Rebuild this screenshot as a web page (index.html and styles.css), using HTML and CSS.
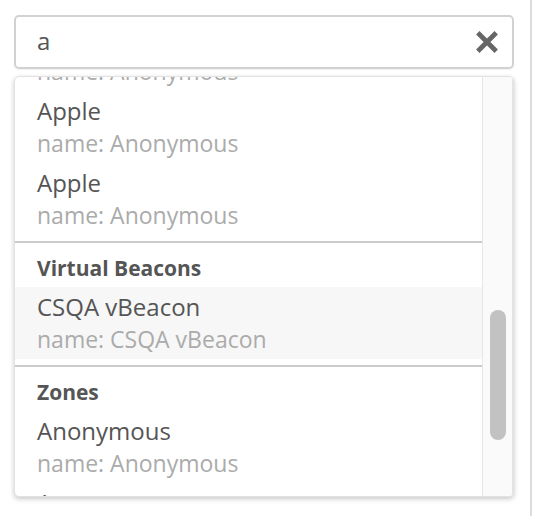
FILE: index.html
```html
<!DOCTYPE html>
<html>
<head>
<meta charset="utf-8">
<link rel="stylesheet" href="styles.css">
</head>
<body>
<div class="panel">
  <div class="search">
    <span class="query">a</span>
    <svg class="clear" viewBox="0 0 24 24" width="26" height="26" aria-hidden="true">
      <path d="M3.5 3.5 L20.5 20.5 M20.5 3.5 L3.5 20.5" stroke="#666" stroke-width="4.4" stroke-linecap="butt" fill="none"/>
    </svg>
  </div>
  <div class="dropdown">
    <div class="list">
      <div class="list-inner" style="margin-top:-58px">
        <div class="group">
          <div class="item"><div class="title">Anonymous</div><div class="sub">name: Anonymous</div></div>
          <div class="item"><div class="title">Apple</div><div class="sub">name: Anonymous</div></div>
          <div class="item"><div class="title">Apple</div><div class="sub">name: Anonymous</div></div>
        </div>
        <div class="group">
          <div class="header">Virtual Beacons</div>
          <div class="item active"><div class="title">CSQA vBeacon</div><div class="sub">name: CSQA vBeacon</div></div>
        </div>
        <div class="group">
          <div class="header">Zones</div>
          <div class="item"><div class="title">Anonymous</div><div class="sub">name: Anonymous</div></div>
          <div class="item"><div class="title">Anonymous</div><div class="sub">name: Anonymous</div></div>
        </div>
      </div>
    </div>
    <div class="track"><div class="thumb"></div></div>
  </div>
</div>
</body>
</html>
```
FILE: styles.css
```css
html, body {
  margin: 0;
  padding: 0;
  background: #fff;
}
body {
  font-family: "Open Sans", "DejaVu Sans", sans-serif;
}
.panel {
  width: 532px;
  height: 516px;
  box-sizing: border-box;
  border-right: 2px solid #dcdcdc;
  padding: 15px 0 0 14px;
}
.search {
  width: 500px;
  height: 54px;
  box-sizing: border-box;
  border: 2px solid #d2d2d2;
  border-radius: 5px;
  display: flex;
  align-items: center;
  padding: 0 12px 0 21px;
  box-shadow: 0 1px 1px rgba(0,0,0,0.06);
}
.query {
  flex: 1;
  font-size: 24px;
  color: #555;
  line-height: 1;
  padding-bottom: 2px;
}
.clear {
  display: block;
  flex: 0 0 auto;
}
.dropdown {
  margin-top: 7px;
  width: 500px;
  height: 421px;
  box-sizing: border-box;
  border: 1px solid #e2e2e2;
  border-radius: 5px;
  box-shadow: 0 2px 5px rgba(0,0,0,0.22);
  display: flex;
  overflow: hidden;
  background: #fff;
}
.list {
  flex: 1;
  overflow: hidden;
}
.group {
  padding-bottom: 6px;
}
.group + .group {
  border-top: 2px solid #cbcbcb;
}
.header {
  padding: 9px 0 3px 22px;
  line-height: 32px;
  font-size: 21px;
  font-weight: 700;
  color: #555;
}
.item {
  padding: 4px 0 4px 22px;
}
.item.active {
  background: #f7f7f7;
}
.title {
  line-height: 32px;
  font-size: 24px;
  color: #555;
}
.sub {
  line-height: 32px;
  font-size: 23px;
  color: #ababab;
}
.track {
  flex: 0 0 31px;
  box-sizing: border-box;
  background: #fafafa;
  border-left: 1px solid #e6e6e6;
  border-right: 1px solid #e4e4e4;
  padding: 233px 0 0 7px;
}
.thumb {
  width: 16px;
  height: 130px;
  border-radius: 8px;
  background: #c2c2c2;
}
```
